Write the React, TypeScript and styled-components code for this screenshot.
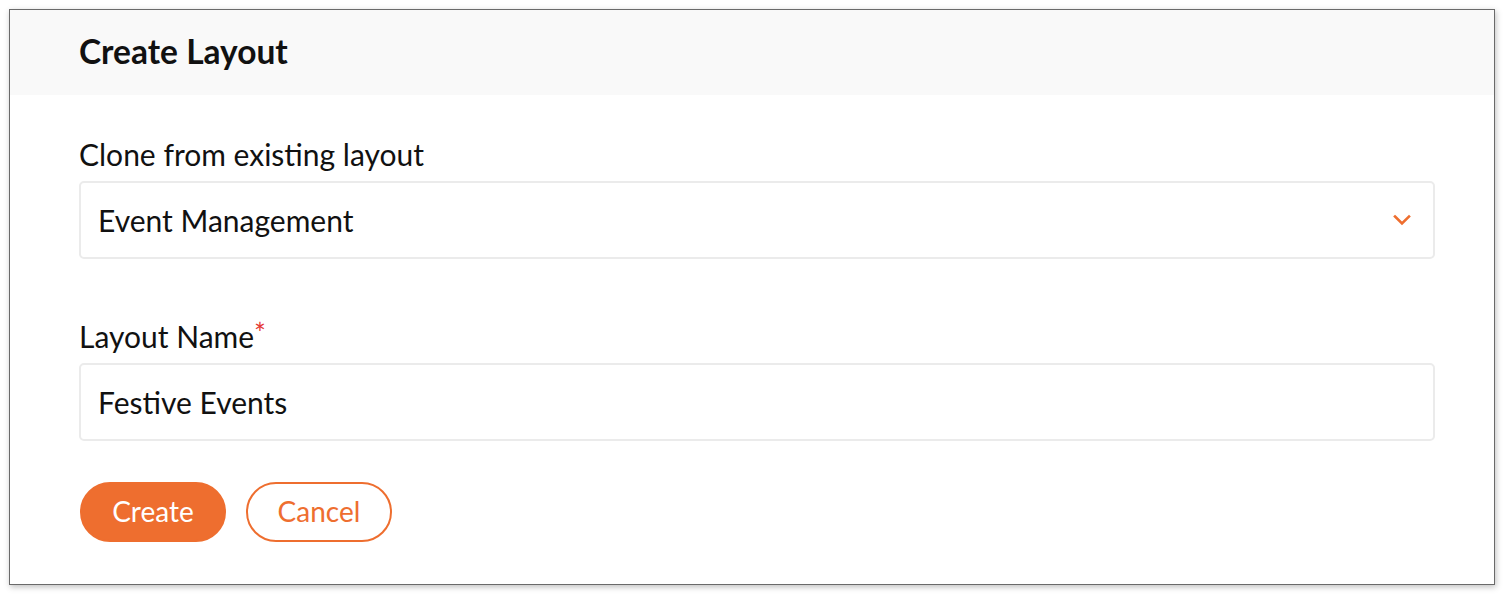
import styled, { createGlobalStyle } from 'styled-components';

const ORANGE = '#ee6e2f';

const GlobalStyle = createGlobalStyle`
  html, body {
    margin: 0;
    padding: 0;
    background: #ffffff;
  }
  body {
    font-family: 'Lato', 'Noto Sans', sans-serif;
    color: #111;
  }
`;

const Page = styled.div`
  padding: 9px;
  width: 1504px;
  height: 594px;
  box-sizing: border-box;
`;

const Panel = styled.div`
  display: flex;
  flex-direction: column;
  width: 1486px;
  height: 576px;
  box-sizing: border-box;
  border: 1px solid #6a6a6a;
  background: #fff;
  box-shadow: 1px 2px 6px rgba(0, 0, 0, 0.25);
`;

const Header = styled.div`
  display: flex;
  align-items: center;
  height: 85px;
  padding: 0 0 4px 69px;
  box-sizing: border-box;
  background: #f9f9f9;
`;

const Title = styled.h1`
  margin: 0;
  font-size: 33.5px;
  font-weight: 700;
  color: #111;
`;

const Body = styled.div`
  display: flex;
  flex-direction: column;
  padding: 43px 59px 0 69px;
`;

const Field = styled.div<{ $mb: number }>`
  display: flex;
  flex-direction: column;
  gap: 11px;
  margin-bottom: ${(p) => p.$mb}px;
`;

const Label = styled.label`
  font-size: 30px;
  line-height: 32px;
  color: #111;
`;

const Required = styled.span`
  color: #e53935;
  font-size: 28px;
  vertical-align: top;
  line-height: 26px;
`;

const Box = styled.div`
  display: flex;
  align-items: center;
  justify-content: space-between;
  height: 78px;
  box-sizing: border-box;
  padding: 0 22px 0 17px;
  border: 2px solid #ebebeb;
  border-radius: 5px;
  font-size: 30px;
  color: #111;
`;

const Actions = styled.div`
  display: flex;
  gap: 20px;
  padding-left: 1px;
`;

const Button = styled.button<{ $primary?: boolean }>`
  width: 146px;
  height: 60px;
  border-radius: 30px;
  box-sizing: border-box;
  padding: 0 0 2px;
  font-family: 'Lato', 'Noto Sans', sans-serif;
  font-size: 28px;
  cursor: pointer;
  border: 2px solid ${ORANGE};
  background: ${(p) => (p.$primary ? ORANGE : '#fff')};
  color: ${(p) => (p.$primary ? '#fff' : ORANGE)};
`;

const Chevron = () => (
  <svg width="18" height="12" viewBox="0 0 18 12" fill="none">
    <path d="M2 2.5 L9 9.5 L16 2.5" stroke={ORANGE} strokeWidth="2.6" strokeLinecap="square" />
  </svg>
);

const App = () => (
  <>
    <GlobalStyle />
    <Page>
      <Panel>
        <Header>
          <Title>Create Layout</Title>
        </Header>
        <Body>
          <Field $mb={61}>
            <Label>Clone from existing layout</Label>
            <Box>
              <span>Event Management</span>
              <Chevron />
            </Box>
          </Field>
          <Field $mb={41}>
            <Label>
              Layout Name<Required>*</Required>
            </Label>
            <Box>
              <span>Festive Events</span>
            </Box>
          </Field>
          <Actions>
            <Button $primary>Create</Button>
            <Button>Cancel</Button>
          </Actions>
        </Body>
      </Panel>
    </Page>
  </>
);

export default App;
